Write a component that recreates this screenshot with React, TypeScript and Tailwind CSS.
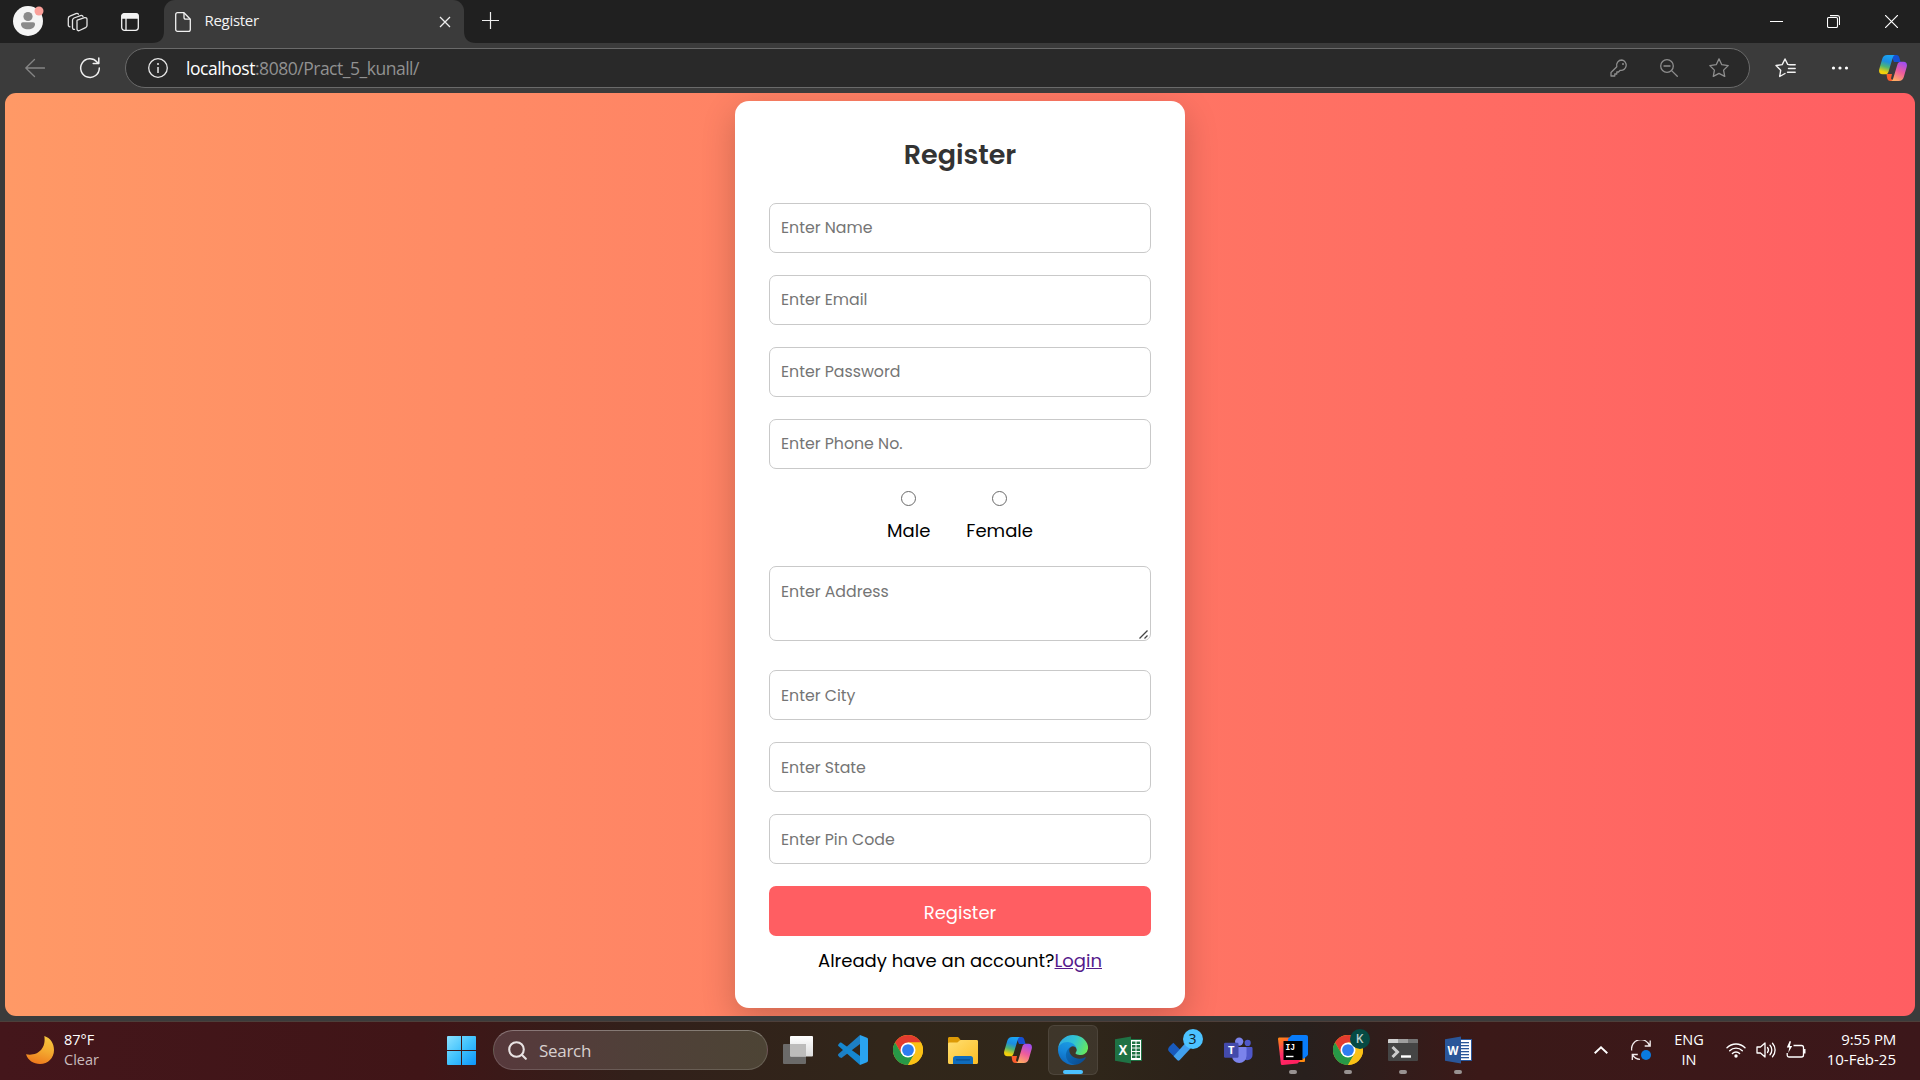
import type { ReactNode } from "react";

function ChromeLogo() {
  return (
    <svg viewBox="0 0 48 48" className="size-[30px]">
      <circle cx="24" cy="24" r="24" fill="#fbc116" />
      <path d="M24 12H44.8A24 24 0 0 0 24 0 24 24 0 0 0 3.2 12L13.6 30 24 12Z" fill="#e33b2e" />
      <path d="M3.2 12A24 24 0 0 0 24 48L34.4 30 13.6 30Z" fill="#279847" />
      <path d="M24 48A24 24 0 0 0 44.8 12H24L34.4 30Z" fill="#fbc116" />
      <circle cx="24" cy="24" r="12" fill="#fff" />
      <circle cx="24" cy="24" r="9.4" fill="#2f7df0" />
    </svg>
  );
}

function CopilotLogo({ id }: { id: string }) {
  return (
    <svg viewBox="0 0 28 26" className="h-[26px] w-7">
      <defs>
        <linearGradient id={id + "a"} x1="0.6" y1="0" x2="0.35" y2="1">
          <stop offset="0" stopColor="#1aa5f4" />
          <stop offset="0.35" stopColor="#1d8de0" />
          <stop offset="0.62" stopColor="#4fb572" />
          <stop offset="0.9" stopColor="#f2cf0b" />
        </linearGradient>
        <linearGradient id={id + "b"} x1="0.7" y1="0" x2="0.3" y2="1">
          <stop offset="0" stopColor="#a04df0" />
          <stop offset="0.5" stopColor="#ee5c9c" />
          <stop offset="1" stopColor="#ffad62" />
        </linearGradient>
      </defs>
      <path d="M12 0h5.5c1.7 0 2.3 1 2.8 2.6L21.6 7H15Z" fill="#1550d2" />
      <path d="M7.5 19H13l-1 4.500 2 2.500h-2.600c-2 0-2.800-1.200-3.300-3Z" fill="#fb5b2c" />
      <path d="M8.200 0H16c-1.500.5-2 1.800-2.500 3.400L9.600 16.500C9 18.500 8 19.300 6 19.300H3.500C.4 19.300-.4 16.800.3 14L3.200 4C4 1.400 5.600 0 8.200 0Z" fill={`url(#${id}a)`} />
      <path d="M19.800 26H12c1.500-.5 2-1.800 2.500-3.400L18.400 9.500C19 7.500 20 6.700 22 6.700h2.500c3.100 0 3.900 2.500 3.200 5.300L24.800 22c-.8 2.600-2.400 4-5 4Z" fill={`url(#${id}b)`} />
    </svg>
  );
}

function EdgeLogo() {
  return (
    <svg viewBox="0 0 256 256" className="size-[30px]">
      <defs>
        <linearGradient id="edgeDeep" x1="0.2" y1="0.2" x2="1" y2="0.8">
          <stop offset="0" stopColor="#0c69b5" />
          <stop offset="1" stopColor="#0b4a8e" />
        </linearGradient>
        <linearGradient id="edgeMid" x1="0.6" y1="0" x2="0.3" y2="1">
          <stop offset="0" stopColor="#1b9de2" />
          <stop offset="0.5" stopColor="#1585d9" />
          <stop offset="1" stopColor="#0d63b8" />
        </linearGradient>
        <linearGradient id="edgeTop" x1="0" y1="0.3" x2="1" y2="0.6">
          <stop offset="0" stopColor="#2fa9e2" />
          <stop offset="0.5" stopColor="#31c4d3" />
          <stop offset="1" stopColor="#66e85c" />
        </linearGradient>
      </defs>
      <path d="M231 190.500a94 94 0 0 1-10.500 4.700 101.900 101.900 0 0 1-36 6.500c-47.400 0-88.700-32.600-88.700-74.500a31.700 31.700 0 0 1 16.500-27.500c-42.900 1.800-53.900 46.500-53.900 72.700 0 74 68.300 81.600 83 81.600 8 0 20-2.300 27.200-4.600l1.300-.4a128 128 0 0 0 66.600-52.800 4 4 0 0 0-5.500-5.700Z" fill="url(#edgeDeep)" />
      <path d="M105.700 241.400a79.200 79.200 0 0 1-22.700-21.300 80.700 80.700 0 0 1 29.500-120.400c3.100-1.500 8.500-4.100 15.600-4a32.400 32.400 0 0 1 25.700 13 31.900 31.900 0 0 1 6.300 18.700c0-.2 24.500-79.600-80-79.600-43.900 0-80 41.700-80 78.200a130.200 130.200 0 0 0 12.100 56 128 128 0 0 0 156.400 67.100 75.500 75.500 0 0 1-62.900-7.700Z" fill="url(#edgeMid)" />
      <path d="M152.300 148.900c-.8 1-3.300 2.500-3.300 5.700 0 2.600 1.700 5.200 4.800 7.300 14.400 10.100 41.700 8.700 41.800 8.700a59.900 59.900 0 0 0 30.500-8.500A61.800 61.800 0 0 0 256.500 109c.3-22.400-8-37.300-11.300-43.900C223.900 23.500 178 0 128 0A128 128 0 0 0 0 126.200C.5 89.700 36.800 60.200 80 60.200c3.500 0 23.500.3 42 10.100 16.300 8.500 24.900 18.900 30.800 29.200 6.200 10.700 7.300 24.100 7.300 29.500 0 5.400-2.700 13.300-7.800 19.900Z" fill="url(#edgeTop)" />
    </svg>
  );
}

function OfficeLogo({ letter, kind }: { letter: string; kind: "excel" | "word" }) {
  const excel = kind === "excel";
  const main = excel ? "#1f7244" : "#2a5699";
  return (
    <svg viewBox="0 0 27 28" className="h-7 w-[27px]">
      <rect x="14" y="3.500" width="12.500" height="21" fill="#fff" stroke={main} strokeWidth="1" />
      {excel
        ? [5.5, 9, 12.5, 16, 19.5].map((y) => (
            <g key={y} fill="#1f7244">
              <rect x="17" y={y} width="3.500" height="2.500" />
              <rect x="21.500" y={y} width="3.500" height="2.500" />
            </g>
          ))
        : [6, 9, 12, 15, 18, 21].map((y) => <rect key={y} x="16" y={y} width="8" height="1.300" fill={main} />)}
      <path d="M0 3.200 16 .5v27L0 24.800Z" fill={main} />
      <text x="8" y="19" textAnchor="middle" fontSize={excel ? 14.5 : 13} fontWeight="700" fill="#fff" fontFamily="Open Sans, sans-serif" textLength={excel ? 8.5 : 11} lengthAdjust="spacingAndGlyphs">
        {letter}
      </text>
    </svg>
  );
}

function Slot({ children, running }: { children: ReactNode; running?: boolean }) {
  return (
    <div className="relative flex h-[50px] w-[55px] items-center justify-center">
      {children}
      {running && <span className="absolute bottom-px left-1/2 h-1 w-2 -translate-x-1/2 rounded-full bg-[#989291]" />}
    </div>
  );
}

function TabBar() {
  return (
    <div className="flex h-[43px] items-center bg-[#202020]">
      <svg viewBox="0 0 30 30" className="mb-px ml-[13px] size-[30px] shrink-0 overflow-visible">
        <circle cx="15" cy="15" r="15" fill="#f5f5f5" />
        <circle cx="15" cy="10.500" r="4.600" fill="#8a8a8a" />
        <path d="M8 18.300c0-1.200.6-2 2-2h10c1.400 0 2 .8 2 2 0 3-3 5-7 5s-7-2-7-5Z" fill="#8a8a8a" />
        <circle cx="26" cy="5" r="4.500" fill="#fba09a" />
      </svg>
      <svg viewBox="0 0 22 22" className="ml-6 size-[22px] shrink-0" fill="none" stroke="#e4e4e4" strokeWidth="1.300" strokeLinejoin="round" strokeLinecap="round">
        <path d="m10.300 9.200 7.200-2.500c1.200-.4 2.500.3 2.500 1.500v6.300c0 1-.5 1.700-1.500 2.200l-6 2.800c-1.300.6-2.500 0-2.500-1.500v-7c0-.9-.3-1.500.3-1.800Z" />
        <path d="M7.500 18.300c-1.300.2-2-.5-2-1.800V9.200c0-1 .4-1.700 1.500-2.200l6.500-2.400c1.300-.4 2.200 0 2.500 1" />
        <path d="M3 15.800c-1 0-1.700-.7-1.700-1.800V7.500c0-1.200.5-2 1.600-2.400l6-2.500c1.100-.4 2-.2 2.500.6" />
      </svg>
      <svg viewBox="0 0 18 18" className="ml-8 size-[18px] shrink-0" fill="none" stroke="#f2f2f2" strokeWidth="1.300">
        <rect x="0.700" y="0.700" width="16.600" height="16.600" rx="2.800" />
        <path d="M1 3.200C1 1.500 2 1 3.200 1h11.600C16.300 1 17 1.800 17 3.200V5H1Z" fill="#f2f2f2" />
        <path d="M5 5v12" />
      </svg>

      <svg viewBox="0 0 12 12" className="ml-[13px] size-3 shrink-0 self-end">
        <path d="M12 0v12H0C8 12 12 8 12 0Z" fill="#3b3b3b" />
      </svg>
      <div className="flex h-[43px] w-[300px] shrink-0 items-center rounded-t-[11px] bg-[#3b3b3b]">
        <svg viewBox="0 0 16 20" className="ml-[11px] h-5 w-4" fill="none" stroke="#f1f1f1" strokeWidth="1.300" strokeLinejoin="round">
          <path d="M.7 2.700C.7 1.400 1.400.7 2.600.7H9l6.300 6.500v10.200c0 1.200-.7 1.900-1.900 1.900H2.600c-1.200 0-1.900-.7-1.900-1.900Z" />
          <path d="M9 .9v4.600c0 1.100.6 1.700 1.700 1.700h4.500" />
        </svg>
        <span className="mb-1 ml-[13.500px] text-[15px] leading-5 tracking-[-0.300px] text-[#f4f4f4]">Register</span>
        <svg viewBox="0 0 12 12" className="mr-[13.500px] ml-auto size-3" stroke="#eee" strokeWidth="1.300" fill="none">
          <path d="m1 1 10 10M11 1 1 11" />
        </svg>
      </div>
      <svg viewBox="0 0 12 12" className="size-3 shrink-0 self-end">
        <path d="M0 0v12h12C4 12 0 8 0 0Z" fill="#3b3b3b" />
      </svg>
      <svg viewBox="0 0 17 17" className="mb-0.5 ml-[6px] size-[17px] shrink-0" stroke="#eee" strokeWidth="1.200">
        <path d="M8.500 0v17M0 8.500h17" />
      </svg>

      <svg viewBox="0 0 13 13" className="ml-auto size-[13px]" stroke="#fff" strokeWidth="1">
        <path d="M0 6.500h13" />
      </svg>
      <svg viewBox="0 0 13 13" className="ml-11 size-[13px]" fill="none" stroke="#fff" strokeWidth="1.100">
        <rect x="0.500" y="2.500" width="10" height="10" rx="1.300" />
        <path d="M3 .6h7.500c1.200 0 2 .8 2 2V10" />
      </svg>
      <svg viewBox="0 0 13 13" className="mr-[22px] ml-[45px] size-[13px]" stroke="#fff" strokeWidth="1.200">
        <path d="m0 0 13 13M13 0 0 13" />
      </svg>
    </div>
  );
}

function Toolbar() {
  return (
    <div className="flex h-[50px] items-center bg-[#3b3b3b]">
      <svg viewBox="0 0 20 20" className="ml-[25px] size-5" fill="none" stroke="#858585" strokeWidth="1.300" strokeLinecap="round" strokeLinejoin="round">
        <path d="M19.500 10H.8M9.500 1.500.8 10l8.700 8.500" />
      </svg>
      <svg viewBox="0 0 20 20" className="ml-[35px] size-5 overflow-visible" fill="none" stroke="#f0f0f0" strokeWidth="1.500" strokeLinecap="round" strokeLinejoin="round">
        <path d="M19.300 10A9.300 9.300 0 1 1 17 4l1.500 1.500M18.800 0v5.600h-5.600" />
      </svg>
      <div className="ml-[25px] flex h-10 w-[1625px] items-center rounded-full border border-[#6a6a6a] bg-[#292929]">
        <svg viewBox="0 0 20 20" className="ml-[22px] size-5" fill="none" stroke="#e8e8e8" strokeWidth="1.300">
          <circle cx="10" cy="10" r="9.300" />
          <path d="M10 9v6" strokeWidth="1.500" />
          <circle cx="10" cy="6" r="1" fill="#e8e8e8" stroke="none" />
        </svg>
        <span className="mb-px ml-[18px] text-[17.500px] leading-6 tracking-[-0.480px] text-[#919191]">
          <span className="text-white">localhost</span>:8080/Pract_5_kunall/
        </span>
        <svg viewBox="0 0 18 18" className="ml-auto size-[18px]" fill="none" stroke="#8e8e8e" strokeWidth="1.300" strokeLinejoin="round">
          <path d="M11.800 1a5.200 5.200 0 0 0-5 6.700L1 13.500V17h3.800v-2h2v-2h1.700l1.700-1.700A5.200 5.200 0 1 0 11.800 1Z" />
          <circle cx="13" cy="5" r="1" fill="#8e8e8e" stroke="none" />
        </svg>
        <svg viewBox="0 0 18 18" className="ml-8 size-[18px]" fill="none" stroke="#8e8e8e" strokeWidth="1.300" strokeLinecap="round">
          <circle cx="7" cy="7" r="6.300" />
          <path d="M4 7h6M11.600 11.600l5.700 5.700" />
        </svg>
        <svg viewBox="0 0 20 20" className="mr-5 ml-[31px] size-5" fill="none" stroke="#8e8e8e" strokeWidth="1.300" strokeLinejoin="round">
          <path d="m10 .9 2.800 5.800 6.400.9-4.600 4.500 1.100 6.300L10 15.400l-5.700 3 1.100-6.300L.8 7.600l6.400-.9Z" />
        </svg>
      </div>
      <svg viewBox="0 0 21 20" className="ml-[25px] h-5 w-[21px]" fill="none" stroke="#f2f2f2" strokeWidth="1.400" strokeLinejoin="round" strokeLinecap="round">
        <path d="M10 15.500l-5.300 3 1-6.300L1 7.500l6.200-.9L10 1l2.700 5.400 2.300.3h5.200M13.500 10.500h6.700M12.500 14.200h7.700" />
      </svg>
      <svg viewBox="0 0 18 4" className="ml-[35px] h-1 w-[18px]" fill="#fff">
        <circle cx="2.500" cy="2" r="1.600" />
        <circle cx="9" cy="2" r="1.600" />
        <circle cx="15.500" cy="2" r="1.600" />
      </svg>
      <div className="ml-[30px]">
        <CopilotLogo id="bar" />
      </div>
    </div>
  );
}

function Field({ label, raised }: { label: string; raised?: boolean }) {
  return (
    <input
      type="text"
      placeholder={label}
      className={
        "block h-[50px] w-[382px] rounded-[7px] border border-[#c9c9c9] bg-white px-[11px] text-[15.750px] outline-none placeholder:text-[#757575] " +
        (raised ? "pb-0.5" : "pb-0")
      }
    />
  );
}

function Choice({ label }: { label: string }) {
  return (
    <label className="flex flex-col items-center gap-[11px]">
      <input type="radio" name="gender" className="size-[15px] appearance-none rounded-full border-[1.200px] border-[#6a6a6a] bg-white" />
      {label}
    </label>
  );
}

function RegisterCard() {
  return (
    <form className="flex h-[907px] w-[450px] flex-col items-center rounded-[14px] bg-white font-[Poppins,sans-serif] shadow-[0_11px_34px_rgba(0,0,0,0.2)]">
      <h2 className="mt-[36px] text-[27px] leading-9 font-semibold text-[#333]">Register</h2>
      <div className="mt-[30px] flex flex-col gap-[22px]">
        <Field label="Enter Name" raised />
        <Field label="Enter Email" raised />
        <Field label="Enter Password" raised />
        <Field label="Enter Phone No." raised />
      </div>
      <div className="mt-[22px] flex gap-[36px] text-[18px] leading-[27px] text-black">
        <Choice label="Male" />
        <Choice label="Female" />
      </div>
      <div className="relative mt-[22px]">
        <textarea
          placeholder="Enter Address"
          className="block h-[75px] w-[382px] resize-none rounded-[7px] border border-[#c9c9c9] bg-white px-[11px] py-[13px] text-[15.750px] leading-6 outline-none placeholder:text-[#757575]"
        />
        <svg viewBox="0 0 9 9" className="absolute right-[3px] bottom-0.5 size-[9px]" stroke="#444" strokeWidth="1.300">
          <path d="M.5 8.500 8.500.5M5.500 8.500l3-3" />
        </svg>
      </div>
      <div className="mt-[29px] flex flex-col gap-[22px]">
        <Field label="Enter City" />
        <Field label="Enter State" />
        <Field label="Enter Pin Code" />
        <button type="button" className="h-[50px] w-[382px] rounded-[7px] bg-[#ff5e62] pt-0.5 text-[18px] text-white">
          Register
        </button>
      </div>
      <p className="mt-[11px] text-[18px] leading-[27px] text-black">
        Already have an account?
        <a className="text-[#551a8b] underline">Login</a>
      </p>
    </form>
  );
}

function Taskbar() {
  return (
    <div className="flex h-[59px] items-center border-t border-[#4d3f3a] bg-[linear-gradient(90deg,#44161b_0%,#401517_22%,#32201a_33%,#31261a_46%,#30271a_56%,#2c2219_62%,#28201d_68%,#3b1918_77%,#3c171a_100%)] pb-0.5">
      <div className="flex w-[447px] shrink-0 items-center">
        <svg viewBox="0 0 28 28" className="ml-[26px] size-7">
          <defs>
            <linearGradient id="moon" x1="0.700" y1="0" x2="0.400" y2="1">
              <stop offset="0" stopColor="#f6c63e" />
              <stop offset="0.500" stopColor="#f3a92f" />
              <stop offset="1" stopColor="#ee7a1d" />
            </linearGradient>
          </defs>
          <path d="M18.300 0C24.500 2 28 7.500 28 14c0 8-6 14-14 14C7.500 28 2 24.500 0 18.300c11 2.200 20.500-5.300 18.300-18.300Z" fill="url(#moon)" />
        </svg>
        <div className="mb-px ml-[10px] text-[14.500px] leading-5 text-white">
          <div>87°F</div>
          <div className="text-[#c9bcbd]">Clear</div>
        </div>
      </div>
      <svg viewBox="0 0 29 29" className="size-[29px] shrink-0">
        <defs>
          <linearGradient id="win" x1="0" y1="0" x2="29" y2="29" gradientUnits="userSpaceOnUse">
            <stop offset="0" stopColor="#8be2ff" />
            <stop offset="0.500" stopColor="#40c2fd" />
            <stop offset="1" stopColor="#0c95fa" />
          </linearGradient>
        </defs>
        <path d="M0 1a1 1 0 0 1 1-1h13v14H0ZM15 0h13a1 1 0 0 1 1 1v13H15ZM0 15h14v14H1a1 1 0 0 1-1-1ZM15 15h14v13a1 1 0 0 1-1 1H15Z" fill="url(#win)" />
      </svg>
      <div className="ml-[17px] flex h-10 w-[275px] shrink-0 items-center rounded-full border border-white/15 border-t-white/30 bg-[linear-gradient(90deg,#57393c,#504039_50%,#4d4435)]">
        <svg viewBox="0 0 19 19" className="ml-[14px] size-[19px]" fill="none" stroke="#e8e2e2" strokeWidth="2.100" strokeLinecap="round">
          <circle cx="8.500" cy="8.500" r="7.300" />
          <path d="m13.800 13.800 4 4" />
        </svg>
        <span className="mt-px ml-[12px] text-[17px] leading-6 tracking-[-0.300px] text-[#d8d0cf]">Search</span>
      </div>

      <div className="ml-[2.500px] flex">
        <Slot>
          <svg viewBox="0 0 30 28" className="h-7 w-[30px]">
            <defs>
              <linearGradient id="tv" x1="0" y1="0" x2="0" y2="1">
                <stop offset="0" stopColor="#fff" />
                <stop offset="1" stopColor="#dcdcdc" />
              </linearGradient>
            </defs>
            <rect y="8" width="23" height="20" rx="1" fill="#6b6a69" />
            <rect x="7" width="23" height="20.500" rx="1" fill="url(#tv)" />
            <path d="M7 8h16v12.500H8a1 1 0 0 1-1-1Z" fill="#bdbcbb" />
          </svg>
        </Slot>
        <Slot>
          <svg viewBox="0 0 30 30" className="size-[30px]">
            <path d="M22 0v9L3.500 23 1.500 22.300.3 20.700c-.4-.6-.4-1.100.1-1.600Z" fill="#1d7fc4" />
            <path d="M.4 10.900c-.5-.5-.4-1 0-1.500l1.500-1.600c.5-.5 1-.5 1.600-.1L22 21v9Z" fill="#1587d0" />
            <path d="M22 0l7 2.800c.7.300 1 .7 1 1.400v21.600c0 .7-.3 1.100-1 1.400L22 30Z" fill="#2aa4f0" />
          </svg>
        </Slot>
        <Slot>
          <ChromeLogo />
        </Slot>
        <Slot>
          <svg viewBox="0 0 30 27" className="mt-px h-[27px] w-[30px]">
            <defs>
              <linearGradient id="fold" x1="0" y1="0" x2="1" y2="1">
                <stop offset="0" stopColor="#ffdf72" />
                <stop offset="1" stopColor="#fcbd24" />
              </linearGradient>
            </defs>
            <path d="M0 1.500C0 .6.600 0 1.500 0H9c1 0 1.500.3 2 1l1.500 2H28v8H0Z" fill="#dd9a06" />
            <path d="M0 7c0-1 .5-1.500 1.500-1.500h7c1 0 1.500-.3 2-1l.8-.8c.5-.5 1-.7 1.700-.7h15.500c1 0 1.500.5 1.500 1.500v21c0 .9-.6 1.500-1.500 1.500h-27C.6 27 0 26.400 0 25.500Z" fill="url(#fold)" />
            <path d="M5 27v-5.500C5 20 6 19 7.500 19h15c1.500 0 2.500 1 2.500 2.500V27Z" fill="#0f6cbd" />
            <path d="M8.500 22.800h13" stroke="#0a4c8e" strokeWidth="1.200" strokeLinecap="round" />
          </svg>
        </Slot>
        <Slot>
          <CopilotLogo id="task" />
        </Slot>
        <div className="relative flex h-[50px] w-[55px] items-center justify-center">
          <div className="flex size-[50px] items-center justify-center rounded-md border border-white/8 bg-white/7">
            <EdgeLogo />
          </div>
          <span className="absolute bottom-px left-1/2 h-1 w-5 -translate-x-1/2 rounded-full bg-[#4cc2ff]" />
        </div>
        <Slot>
          <OfficeLogo letter="X" kind="excel" />
        </Slot>
        <Slot>
          <svg viewBox="0 0 34 26" className="h-[26px] w-[34px]">
            <path d="m3.500 9.500 3.800-3.800L16.500 15 12 23.500l-9-9c-1.500-1.500-1-3.500.5-5Z" fill="#185abd" />
            <path d="M26.500 0 31 4.500 13.500 23.200c-.6.600-1.400.6-2 0L7.600 19.200 24.600.2Z" fill="#41a0ee" />
          </svg>
          <span className="absolute top-1 left-[27px] flex size-5 items-center justify-center rounded-full bg-[#4cc2ff] text-[14px] leading-5 text-[#10222d]">3</span>
        </Slot>
        <Slot>
          <svg viewBox="0 0 30 27" className="size-[29px]">
            <circle cx="24.500" cy="5.700" r="3.200" fill="#5059c9" />
            <path d="M20 10h8c1 0 1.500.5 1.500 1.500v6.500a5.500 5.500 0 0 1-9.500 3.800Z" fill="#4f57c8" />
            <circle cx="15.700" cy="4.300" r="4.300" fill="#7b83eb" />
            <path d="M10 10h12c.8 0 1.300.5 1.300 1.300V19a7.500 7.500 0 0 1-15 0v-9Z" fill="#7b83eb" />
            <rect y="5.500" width="15" height="15.500" rx="1.300" fill="#434aab" />
            <text x="7.500" y="17.600" textAnchor="middle" fontSize="11.500" fontWeight="700" fill="#fff" fontFamily="Open Sans, sans-serif">
              T
            </text>
          </svg>
        </Slot>
        <Slot running>
          <svg viewBox="0 0 30 30" className="size-[30px]">
            <defs>
              <linearGradient id="ijo" x1="0" y1="0" x2="0.400" y2="1">
                <stop offset="0" stopColor="#ff8a10" />
                <stop offset="0.600" stopColor="#fe2d6a" />
                <stop offset="1" stopColor="#ff2160" />
              </linearGradient>
            </defs>
            <path d="M14 20 27 18v7.500c0 1-.5 1.500-1.500 1.500H18Z" fill="#ff8a10" />
            <path d="M0 4c0-1 .5-1.500 1.500-1.500H12L22 26l-2.500 2.500-15 1.500c-1 0-1.500-.5-1.700-1.500Z" fill="url(#ijo)" />
            <path d="M10 4 13 .8c.5-.5 1-.8 2-.8h13c1.300 0 2 .7 2 2v17c0 1-.3 1.500-1 2l-3.500 3L10 10Z" fill="#087cfa" />
            <rect x="5.500" y="6" width="19" height="19" fill="#000" />
            <text x="7.600" y="15" fontSize="9.500" fontWeight="700" fill="#fff" fontFamily="Liberation Mono, monospace" textLength="9.500" lengthAdjust="spacingAndGlyphs">
              IJ
            </text>
            <path d="M8 21.500h7.500" stroke="#fff" strokeWidth="1.400" />
          </svg>
        </Slot>
        <Slot running>
          <ChromeLogo />
          <span className="absolute top-1 left-[29px] flex size-5 items-center justify-center rounded-full bg-[#064a43] text-[12px] leading-5 font-semibold text-[#bccfca]">K</span>
        </Slot>
        <Slot running>
          <svg viewBox="0 0 30 22" className="h-[22px] w-[30px]">
            <rect width="30" height="22" rx="1" fill="#454545" />
            <path d="M0 1a1 1 0 0 1 1-1h9v4H0Z" fill="#d0d0d0" />
            <path d="M10 0h10v4H10Z" fill="#9e9e9e" />
            <path d="M20 0h9a1 1 0 0 1 1 1v3H20Z" fill="#757575" />
            <path d="m4.500 8 5 5-5 5" fill="none" stroke="#ccc" strokeWidth="3" />
            <path d="M13 17.500h10" stroke="#fff" strokeWidth="2.400" />
          </svg>
        </Slot>
        <Slot running>
          <OfficeLogo letter="W" kind="word" />
        </Slot>
      </div>

      <div className="ml-auto flex items-center">
        <svg viewBox="0 0 14 8" className="h-2 w-[14px]" fill="none" stroke="#fff" strokeWidth="1.900">
          <path d="m.7 7.300 6.300-6 6.300 6" />
        </svg>
        <svg viewBox="0 0 20 20" className="ml-[23px] size-5" fill="none" stroke="#f2eced" strokeWidth="1.300">
          <path d="M.7 10.500A9.300 9.300 0 0 1 18.700 6M19.200 .5v5.500h-5.500M9 19.300a9.300 9.300 0 0 1-7.500-4.500M1.300 20v-5.500h5.500" />
          <circle cx="15" cy="15" r="5" fill="#0a7be0" stroke="none" />
        </svg>
        <div className="ml-[23px] w-[30px] text-center text-[14.500px] leading-5 text-white">
          <div>ENG</div>
          <div>IN</div>
        </div>
        <svg viewBox="0 0 20 16" className="ml-[22px] h-4 w-5" fill="none" stroke="#fff" strokeWidth="1.400" strokeLinecap="round">
          <path d="M1 5.800a12.700 12.700 0 0 1 18 0M3.700 8.700a9 9 0 0 1 12.600 0M6.400 11.500a5.100 5.100 0 0 1 7.200 0" />
          <circle cx="10" cy="14" r="1.700" fill="#fff" stroke="none" />
        </svg>
        <svg viewBox="0 0 20 16" className="ml-[10px] h-4 w-5" fill="none" stroke="#fff" strokeWidth="1.300" strokeLinecap="round" strokeLinejoin="round">
          <path d="M1 5h3.500L9 1v14l-4.500-4H1ZM11.500 5.500a4 4 0 0 1 0 5M14 3.300a7 7 0 0 1 0 9.400M16.500 1.200a10.200 10.200 0 0 1 0 13.600" />
        </svg>
        <svg viewBox="0 0 20 17" className="mb-0.5 ml-[10px] h-[17px] w-5" fill="none" stroke="#fff" strokeWidth="1.300" strokeLinejoin="round">
          <path d="M7.500 4.500h8c1.300 0 2 .7 2 2V14c0 1.300-.7 2-2 2H3.200c-1.300 0-2-.7-2-2v-2" />
          <path d="M18.500 8v4.500" strokeWidth="2" />
          <path d="M3.700 0 .8 6.500h2.500L2.200 12l4-7H3.800L5 .5Z" fill="#fff" stroke="none" />
        </svg>
        <div className="mr-[24px] mb-0.5 ml-[19px] w-[71px] text-right text-[15px] leading-5 whitespace-nowrap text-white">
          <div className="tracking-[-0.200px]">9:55 PM</div>
          <div>10-Feb-25</div>
        </div>
      </div>
    </div>
  );
}

export default function App() {
  return (
    <div className="flex h-[1080px] w-[1920px] flex-col overflow-hidden bg-[#3b3b3b] font-['Open_Sans',sans-serif]">
      <TabBar />
      <Toolbar />
      <main className="mx-[5px] mb-[5px] flex h-[923px] shrink-0 justify-center overflow-hidden rounded-[11px] bg-[linear-gradient(90deg,#ff9966,#ff5e62)] pt-2">
        <RegisterCard />
      </main>
      <Taskbar />
    </div>
  );
}
